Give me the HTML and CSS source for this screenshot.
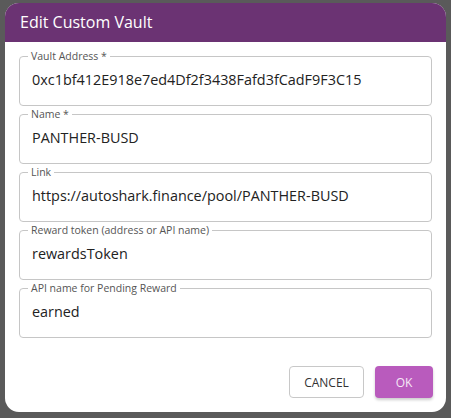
FILE: index.html
```html
<!DOCTYPE html>
<html>
<head>
<meta charset="utf-8">
<link rel="stylesheet" href="styles.css">
</head>
<body>
<div class="backdrop">
  <div class="dialog">
    <div class="dialog-title">Edit Custom Vault</div>
    <div class="dialog-body">
      <fieldset class="field">
        <legend class="field-label">Vault Address *</legend>
        <div class="field-value">0xc1bf412E918e7ed4Df2f3438Fafd3fCadF9F3C15</div>
      </fieldset>
      <fieldset class="field">
        <legend class="field-label">Name *</legend>
        <div class="field-value">PANTHER-BUSD</div>
      </fieldset>
      <fieldset class="field">
        <legend class="field-label">Link</legend>
        <div class="field-value">https://autoshark.finance/pool/PANTHER-BUSD</div>
      </fieldset>
      <fieldset class="field">
        <legend class="field-label">Reward token (address or API name)</legend>
        <div class="field-value">rewardsToken</div>
      </fieldset>
      <fieldset class="field">
        <legend class="field-label">API name for Pending Reward</legend>
        <div class="field-value">earned</div>
      </fieldset>
    </div>
    <div class="dialog-actions">
      <button class="btn btn-cancel">CANCEL</button>
      <button class="btn btn-ok">OK</button>
    </div>
  </div>
</div>
</body>
</html>
```

FILE: styles.css
```css
html, body {
  margin: 0;
  padding: 0;
  background: #5a5a5a;
  font-family: "Open Sans", "Noto Sans", sans-serif;
}

.backdrop {
  width: 451px;
  height: 418px;
  padding: 3px 5px 0 5px;
  box-sizing: border-box;
}

.dialog {
  width: 441px;
  height: 409px;
  background: #ffffff;
  border-radius: 14px;
  overflow: hidden;
  display: flex;
  flex-direction: column;
}

.dialog-title {
  height: 39px;
  background: #6b3373;
  color: #ffffff;
  font-size: 16px;
  line-height: 39px;
  padding-left: 15px;
  flex: none;
}

.dialog-body {
  display: flex;
  flex-direction: column;
  gap: 2px;
  padding: 8px 14px 0 14px;
}

.field {
  margin: 0;
  padding: 0 12px;
  border: 1px solid #c6c6c6;
  border-radius: 4px;
  height: 56px;
  box-sizing: border-box;
  min-width: 0;
}

.field-label {
  font-size: 10.5px;
  line-height: 12px;
  color: #555555;
  padding: 0 3px;
  margin-left: -4px;
}

.field-value {
  font-size: 14.4px;
  color: #222222;
  line-height: 20px;
  padding-top: 8px;
  white-space: nowrap;
}

.dialog-actions {
  display: flex;
  justify-content: flex-end;
  gap: 11px;
  padding: 28px 13px 0 0;
}

.btn {
  height: 32px;
  font-family: "Open Sans", "Noto Sans", sans-serif;
  font-size: 12px;
  border-radius: 4px;
  padding: 0;
  cursor: pointer;
}

.btn-cancel {
  width: 75px;
  background: #ffffff;
  border: 1px solid #c8c8c8;
  color: #333333;
}

.btn-ok {
  width: 58px;
  background: #b95bbd;
  border: none;
  color: #f6e8f6;
  box-shadow: 0 2px 3px rgba(0, 0, 0, 0.2);
}
```
